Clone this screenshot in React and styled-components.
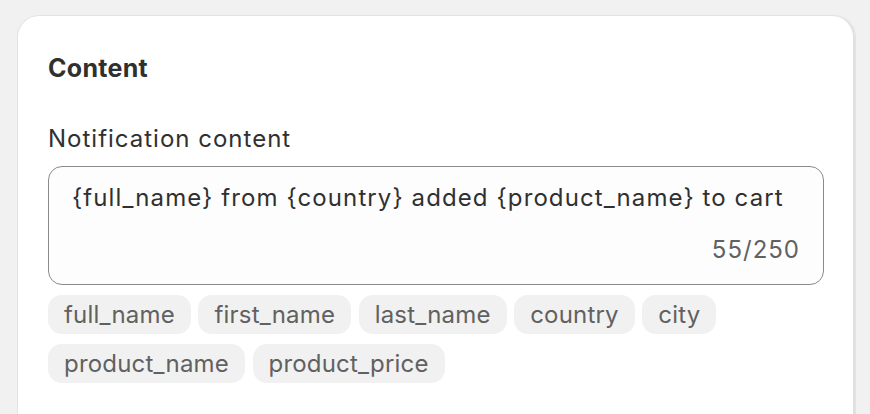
import React from "react";
import styled, { createGlobalStyle } from "styled-components";

const Global = createGlobalStyle`
  html, body { margin: 0; padding: 0; background: #f1f1f1; }
  body { font-family: Inter, "Noto Sans", sans-serif; -webkit-font-smoothing: antialiased; }
`;

const Page = styled.div`
  padding: 15px 14px 0 17px;
  height: 414px;
  box-sizing: border-box;
  overflow: hidden;
`;

const Card = styled.section`
  background: #ffffff;
  border: 1px solid #e3e3e3;
  border-bottom: none;
  border-radius: 22px 22px 0 0;
  box-shadow: inset -2px 0 0 #e0e0e0;
  padding: 36px 31px 40px 30px;
  height: 420px;
  box-sizing: border-box;
`;

const Title = styled.h2`
  margin: 0;
  font-size: 25px;
  line-height: 32px;
  font-weight: 700;
  letter-spacing: 0.3px;
  color: #303030;
`;

const Label = styled.label`
  display: block;
  margin-top: 39px;
  font-size: 24px;
  line-height: 32px;
  font-weight: 400;
  letter-spacing: 1px;
  color: #303030;
`;

const Field = styled.div`
  margin-top: 11px;
  height: 119px;
  box-sizing: border-box;
  border: 1px solid #8a8a8a;
  border-radius: 14px;
  background: #fdfdfd;
  padding: 15px 23px 18px 23px;
  display: flex;
  flex-direction: column;
  justify-content: space-between;
`;

const FieldText = styled.div`
  font-size: 24px;
  line-height: 32px;
  letter-spacing: 1.1px;
  color: #303030;
  white-space: nowrap;
`;

const Counter = styled.div`
  font-size: 24px;
  line-height: 32px;
  letter-spacing: 1px;
  color: #616161;
  text-align: right;
`;

const Chips = styled.div`
  margin-top: 10px;
  display: flex;
  flex-wrap: wrap;
  gap: 10px 7.5px;
`;

const Chip = styled.span`
  display: inline-flex;
  align-items: center;
  height: 39px;
  padding: 0 16px;
  border-radius: 14px;
  background: #f1f1f1;
  color: #616161;
  font-size: 24px;
  line-height: 32px;
  letter-spacing: 0.2px;
`;

const tags = ["full_name", "first_name", "last_name", "country", "city", "product_name", "product_price"];

export default function App() {
  return (
    <>
      <Global />
      <Page>
        <Card>
          <Title>Content</Title>
          <Label>Notification content</Label>
          <Field>
            <FieldText>{"{full_name} from {country} added {product_name} to cart"}</FieldText>
            <Counter>55/250</Counter>
          </Field>
          <Chips>
            {tags.map((t) => (
              <Chip key={t}>{t}</Chip>
            ))}
          </Chips>
        </Card>
      </Page>
    </>
  );
}
